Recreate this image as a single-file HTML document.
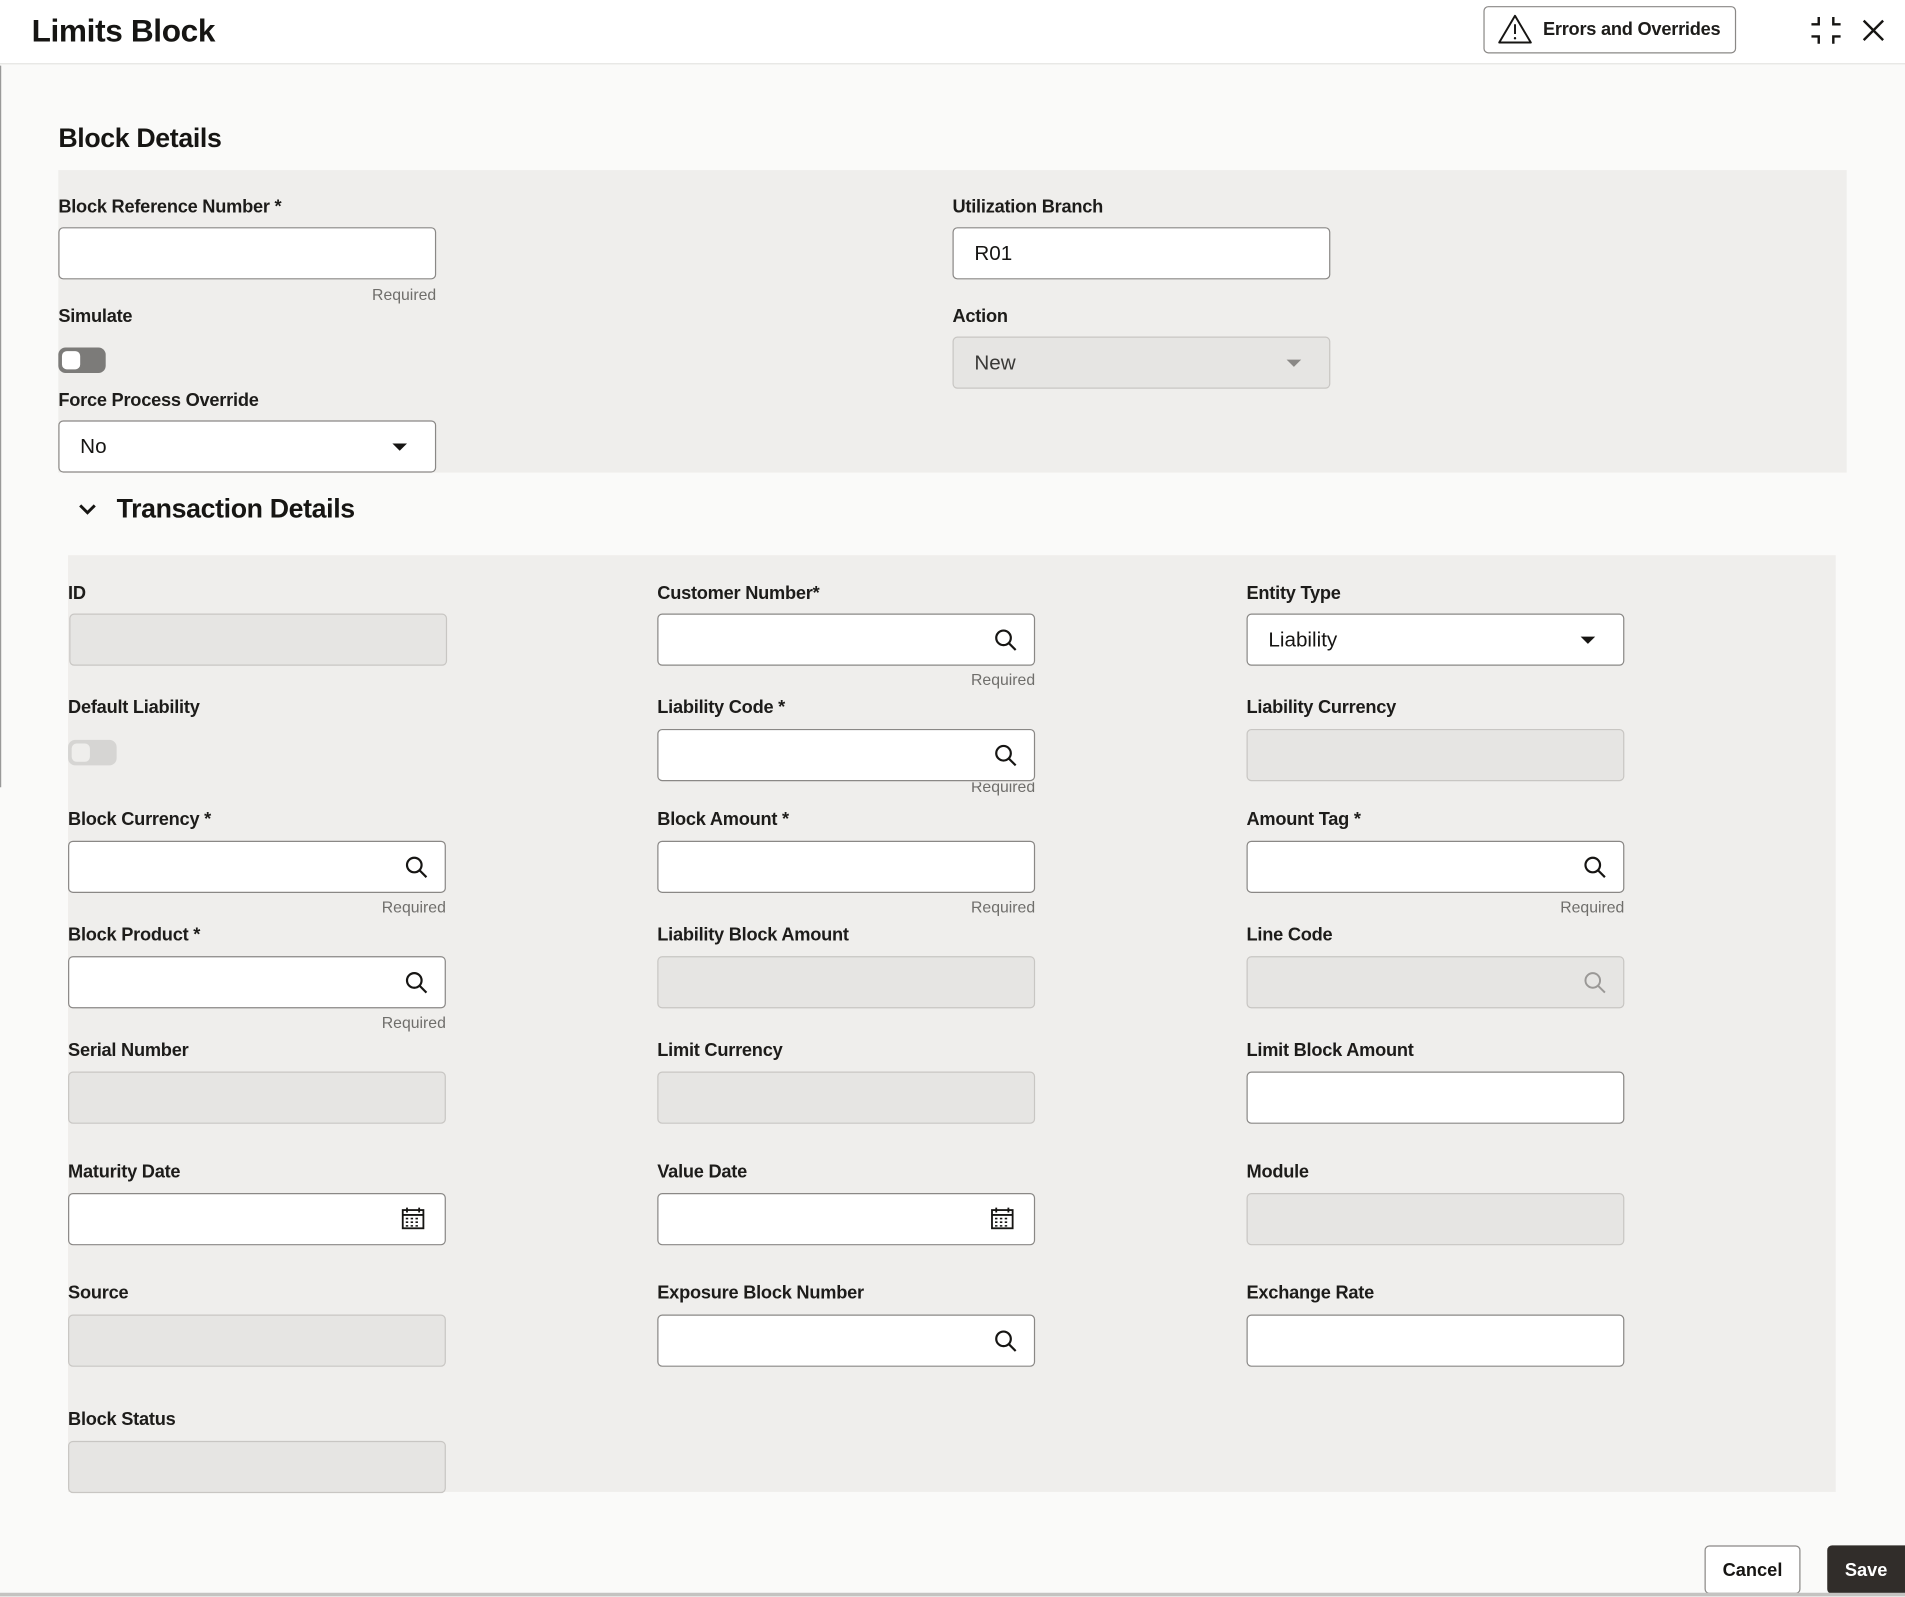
<!DOCTYPE html>
<html><head><meta charset="utf-8"><style>
*{box-sizing:border-box;margin:0;padding:0}
html,body{width:1905px;height:1597px;overflow:hidden;background:#fbfbfa}
#w{position:absolute;left:0;top:0;width:1568px;height:1314px;transform:scale(1.21492);transform-origin:0 0;font-family:"Liberation Sans",sans-serif;color:#161513;background:#fafaf9}
.a{position:absolute}
.l{position:absolute;font-size:15px;font-weight:bold;color:#1d1c1a;white-space:nowrap;letter-spacing:-0.2px;margin-top:1px}
.f{position:absolute;width:311px;height:43px;border:1px solid #8a8886;border-radius:4px;background:#fff}
.d{background:#e6e5e3;border-color:#c8c6c3}
.r{position:absolute;font-size:13px;color:#6f6e6b;width:311px;text-align:right}
.v{position:absolute;left:17px;top:11px;font-size:17px;color:#161513}
.ic{position:absolute;right:13px;top:11px}
.car{position:absolute;right:22px;top:18px;width:0;height:0;border-left:6px solid transparent;border-right:6px solid transparent;border-top:6px solid #161513}
</style></head><body><div id="w">
<div class="a" style="left:0;top:0;width:1568px;height:53px;background:#fff;border-bottom:1px solid #e4e3e1"></div>
<div class="a" style="left:26px;top:10px;font-size:26px;font-weight:bold;letter-spacing:-0.3px">Limits Block</div>
<div class="a" style="left:1221px;top:5px;width:208px;height:39px;border:1px solid #8a8886;border-radius:4px;background:#fff"></div>
<svg class="a" style="left:1232px;top:11px" width="30" height="26" viewBox="0 0 30 26"><path d="M15 2 L28 24 H2 Z" fill="none" stroke="#161513" stroke-width="1.6" stroke-linejoin="round"/><path d="M15 9v8" stroke="#161513" stroke-width="1.6"/><circle cx="15" cy="20.5" r="1" fill="#161513"/></svg>
<div class="a" style="left:1270px;top:16px;font-size:15px;font-weight:bold;color:#1d1c1a;letter-spacing:-0.2px">Errors and Overrides</div>
<svg class="a" style="left:1489px;top:12px" width="28" height="26" viewBox="0 0 28 26"><path d="M2 8h6V2M20 2v6h6M2 18h6v6M20 24v-6h6" fill="none" stroke="#161513" stroke-width="2"/></svg>
<svg class="a" style="left:1532px;top:15px" width="20" height="20" viewBox="0 0 20 20"><path d="M2 2L18 18M18 2L2 18" stroke="#161513" stroke-width="2"/></svg>
<div class="a" style="left:0;top:54px;width:1px;height:594px;background:#999"></div>

<div class="a" style="left:48px;top:101px;font-size:22px;font-weight:bold;letter-spacing:-0.3px">Block Details</div>
<div class="a" style="left:48px;top:140px;width:1472px;height:249px;background:#efeeec"></div>
<div class="l" style="left:48px;top:161px">Block Reference Number *</div>
<div class="f" style="left:48px;top:187px"></div>
<div class="r" style="left:48px;top:235px">Required</div>
<div class="l" style="left:48px;top:251px">Simulate</div>
<div class="a" style="left:48px;top:286px;width:39px;height:21px;border-radius:6px;background:#7c7b79"></div>
<div class="a" style="left:51px;top:289px;width:15px;height:15px;border-radius:4px;background:#fff"></div>
<div class="l" style="left:48px;top:320px">Force Process Override</div>
<div class="f" style="left:48px;top:346px"><span class="v">No</span><span class="car" style="right:23px"></span></div>
<div class="l" style="left:784px;top:161px">Utilization Branch</div>
<div class="f" style="left:784px;top:187px"><span class="v">R01</span></div>
<div class="l" style="left:784px;top:251px">Action</div>
<div class="f d" style="left:784px;top:277px"><span class="v" style="color:#3a3937">New</span><span class="car" style="border-top-color:#8a8886;right:23px"></span></div>

<svg class="a" style="left:63px;top:412px" width="18" height="14" viewBox="0 0 18 14"><path d="M3 4l6 6 6-6" fill="none" stroke="#161513" stroke-width="2.4"/></svg>
<div class="a" style="left:96px;top:406px;font-size:22px;font-weight:bold;letter-spacing:-0.3px">Transaction Details</div>
<div class="a" style="left:56px;top:457px;width:1455px;height:771px;background:#efeeec"></div>

<div class="l" style="left:56px;top:479px">ID</div>
<div class="f d" style="left:57px;top:505px"></div>
<div class="l" style="left:56px;top:573px">Default Liability</div>
<div class="a" style="left:56px;top:609px;width:40px;height:21px;border-radius:6px;background:#d6d5d3"></div>
<div class="a" style="left:59px;top:612px;width:15px;height:15px;border-radius:4px;background:#efeeec"></div>
<div class="l" style="left:56px;top:665px">Block Currency *</div>
<div class="f" style="left:56px;top:692px"><svg class="ic" width="20" height="20" viewBox="0 0 20 20"><circle cx="8" cy="8" r="6" fill="none" stroke="#161513" stroke-width="1.8"/><path d="M12.5 12.5L18 18" stroke="#161513" stroke-width="1.8"/></svg></div>
<div class="r" style="left:56px;top:739px">Required</div>
<div class="l" style="left:56px;top:760px">Block Product *</div>
<div class="f" style="left:56px;top:787px"><svg class="ic" width="20" height="20" viewBox="0 0 20 20"><circle cx="8" cy="8" r="6" fill="none" stroke="#161513" stroke-width="1.8"/><path d="M12.5 12.5L18 18" stroke="#161513" stroke-width="1.8"/></svg></div>
<div class="r" style="left:56px;top:834px">Required</div>
<div class="l" style="left:56px;top:855px">Serial Number</div>
<div class="f d" style="left:56px;top:882px"></div>
<div class="l" style="left:56px;top:955px">Maturity Date</div>
<div class="f" style="left:56px;top:982px"><svg class="ic" style="top:10px;right:16px" width="20" height="20" viewBox="0 0 20 20"><rect x="1.5" y="3" width="17" height="15" fill="none" stroke="#161513" stroke-width="1.5"/><path d="M1.5 7h17M5 1v4M15 1v4" stroke="#161513" stroke-width="1.5"/><path d="M4 10h2M8 10h2M12 10h2M4 13h2M8 13h2M12 13h2M4 16h2M8 16h2M12 16h2" stroke="#161513" stroke-width="1.3"/></svg></div>
<div class="l" style="left:56px;top:1055px">Source</div>
<div class="f d" style="left:56px;top:1082px"></div>
<div class="l" style="left:56px;top:1159px">Block Status</div>
<div class="f d" style="left:56px;top:1186px"></div>

<div class="l" style="left:541px;top:479px">Customer Number*</div>
<div class="f" style="left:541px;top:505px"><svg class="ic" width="20" height="20" viewBox="0 0 20 20"><circle cx="8" cy="8" r="6" fill="none" stroke="#161513" stroke-width="1.8"/><path d="M12.5 12.5L18 18" stroke="#161513" stroke-width="1.8"/></svg></div>
<div class="r" style="left:541px;top:552px">Required</div>
<div class="l" style="left:541px;top:573px">Liability Code *</div>
<div class="f" style="left:541px;top:600px"><svg class="ic" width="20" height="20" viewBox="0 0 20 20"><circle cx="8" cy="8" r="6" fill="none" stroke="#161513" stroke-width="1.8"/><path d="M12.5 12.5L18 18" stroke="#161513" stroke-width="1.8"/></svg></div>
<div class="r" style="left:541px;top:644px;height:12px;overflow:hidden;line-height:8px">Required</div>
<div class="l" style="left:541px;top:665px">Block Amount *</div>
<div class="f" style="left:541px;top:692px"></div>
<div class="r" style="left:541px;top:739px">Required</div>
<div class="l" style="left:541px;top:760px">Liability Block Amount</div>
<div class="f d" style="left:541px;top:787px"></div>
<div class="l" style="left:541px;top:855px">Limit Currency</div>
<div class="f d" style="left:541px;top:882px"></div>
<div class="l" style="left:541px;top:955px">Value Date</div>
<div class="f" style="left:541px;top:982px"><svg class="ic" style="top:10px;right:16px" width="20" height="20" viewBox="0 0 20 20"><rect x="1.5" y="3" width="17" height="15" fill="none" stroke="#161513" stroke-width="1.5"/><path d="M1.5 7h17M5 1v4M15 1v4" stroke="#161513" stroke-width="1.5"/><path d="M4 10h2M8 10h2M12 10h2M4 13h2M8 13h2M12 13h2M4 16h2M8 16h2M12 16h2" stroke="#161513" stroke-width="1.3"/></svg></div>
<div class="l" style="left:541px;top:1055px">Exposure Block Number</div>
<div class="f" style="left:541px;top:1082px"><svg class="ic" width="20" height="20" viewBox="0 0 20 20"><circle cx="8" cy="8" r="6" fill="none" stroke="#161513" stroke-width="1.8"/><path d="M12.5 12.5L18 18" stroke="#161513" stroke-width="1.8"/></svg></div>

<div class="l" style="left:1026px;top:479px">Entity Type</div>
<div class="f" style="left:1026px;top:505px"><span class="v">Liability</span><span class="car" style="right:23px"></span></div>
<div class="l" style="left:1026px;top:573px">Liability Currency</div>
<div class="f d" style="left:1026px;top:600px"></div>
<div class="l" style="left:1026px;top:665px">Amount Tag *</div>
<div class="f" style="left:1026px;top:692px"><svg class="ic" width="20" height="20" viewBox="0 0 20 20"><circle cx="8" cy="8" r="6" fill="none" stroke="#161513" stroke-width="1.8"/><path d="M12.5 12.5L18 18" stroke="#161513" stroke-width="1.8"/></svg></div>
<div class="r" style="left:1026px;top:739px">Required</div>
<div class="l" style="left:1026px;top:760px">Line Code</div>
<div class="f d" style="left:1026px;top:787px"><svg class="ic" width="20" height="20" viewBox="0 0 20 20"><circle cx="8" cy="8" r="6" fill="none" stroke="#9a9896" stroke-width="1.6"/><path d="M12.5 12.5L18 18" stroke="#9a9896" stroke-width="1.6"/></svg></div>
<div class="l" style="left:1026px;top:855px">Limit Block Amount</div>
<div class="f" style="left:1026px;top:882px"></div>
<div class="l" style="left:1026px;top:955px">Module</div>
<div class="f d" style="left:1026px;top:982px"></div>
<div class="l" style="left:1026px;top:1055px">Exchange Rate</div>
<div class="f" style="left:1026px;top:1082px"></div>

<div class="a" style="left:1403px;top:1272px;width:79px;height:40px;border:1px solid #8a8886;border-radius:4px;background:#fff;font-size:15px;font-weight:bold;text-align:center;line-height:40px">Cancel</div>
<div class="a" style="left:1504px;top:1272px;width:64px;height:40px;border-radius:4px 0 0 4px;background:#312d2a;color:#fff;font-size:15px;font-weight:bold;text-align:center;line-height:41px">Save</div>
<div class="a" style="left:0;top:1311px;width:1568px;height:3px;background:#c4c3c1"></div>
</div></body></html>
